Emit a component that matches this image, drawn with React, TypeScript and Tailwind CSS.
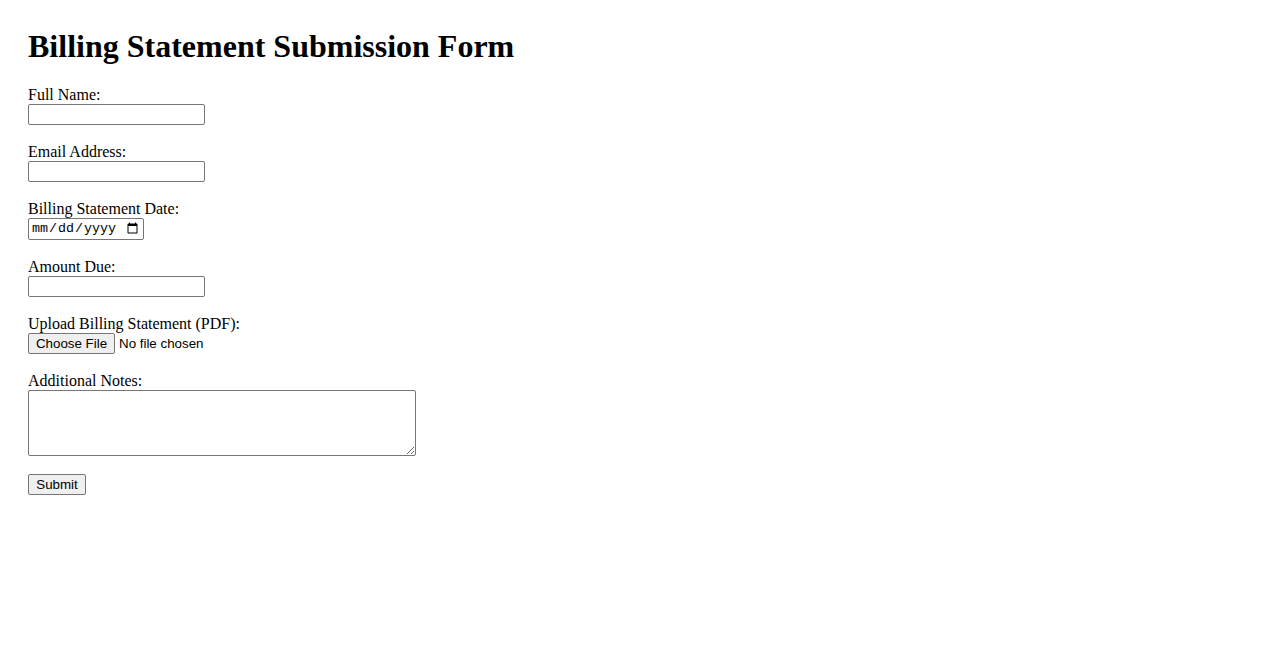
import React from "react";

export default function App() {
  const label = "block h-[18px] leading-[18px] text-[16px] text-black";
  const textInput =
    "block w-[177px] h-[21px] border border-[#767676] rounded-[2px] bg-white px-[2px] text-[13.33px] font-['Liberation_Sans',Arial,sans-serif] outline-none";
  return (
    <div className="min-h-[650px] bg-white pl-[28px] pt-[28px] font-['Liberation_Serif','Times_New_Roman',serif] text-black">
      <h1 className="h-[37px] leading-[37px] text-[32px] font-bold mb-[21px]">
        Billing Statement Submission Form
      </h1>
      <form className="flex flex-col items-start" onSubmit={(e) => e.preventDefault()}>
        <label htmlFor="name" className={label}>Full Name:</label>
        <input id="name" type="text" className={textInput} />

        <label htmlFor="email" className={label + " mt-[18px]"}>Email Address:</label>
        <input id="email" type="email" className={textInput} />

        <label htmlFor="date" className={label + " mt-[18px]"}>Billing Statement Date:</label>
        <input
          id="date"
          type="date"
          className="block w-[116px] h-[22px] border border-[#767676] rounded-[2px] bg-white pl-[2px] pr-[2px] text-[13.33px] font-['Liberation_Mono','DejaVu_Sans_Mono',monospace] outline-none"
        />

        <label htmlFor="amount" className={label + " mt-[18px]"}>Amount Due:</label>
        <input id="amount" type="text" className={textInput} />

        <label htmlFor="file" className={label + " mt-[18px]"}>Upload Billing Statement (PDF):</label>
        <div className="flex items-center h-[21px] font-['Liberation_Sans',Arial,sans-serif] text-[13.33px]">
          <label
            htmlFor="file"
            className="flex items-center justify-center h-[21px] w-[87px] border border-[#767676] rounded-[2px] bg-[#efefef] text-black cursor-default"
          >
            Choose File
          </label>
          <input id="file" type="file" accept="application/pdf" className="hidden" />
          <span className="ml-[4px] text-black">No file chosen</span>
        </div>

        <label htmlFor="notes" className={label + " mt-[18px]"}>Additional Notes:</label>
        <textarea
          id="notes"
          className="block w-[388px] h-[66px] border border-[#767676] rounded-[2px] bg-white p-[2px] text-[13.33px] font-['Liberation_Mono',monospace] outline-none resize"
        />

        <button
          type="submit"
          className="mt-[18px] flex items-center justify-center h-[21px] w-[58px] border border-[#767676] rounded-[2px] bg-[#efefef] text-[13.33px] font-['Liberation_Sans',Arial,sans-serif] text-black"
        >
          Submit
        </button>
      </form>
    </div>
  );
}
